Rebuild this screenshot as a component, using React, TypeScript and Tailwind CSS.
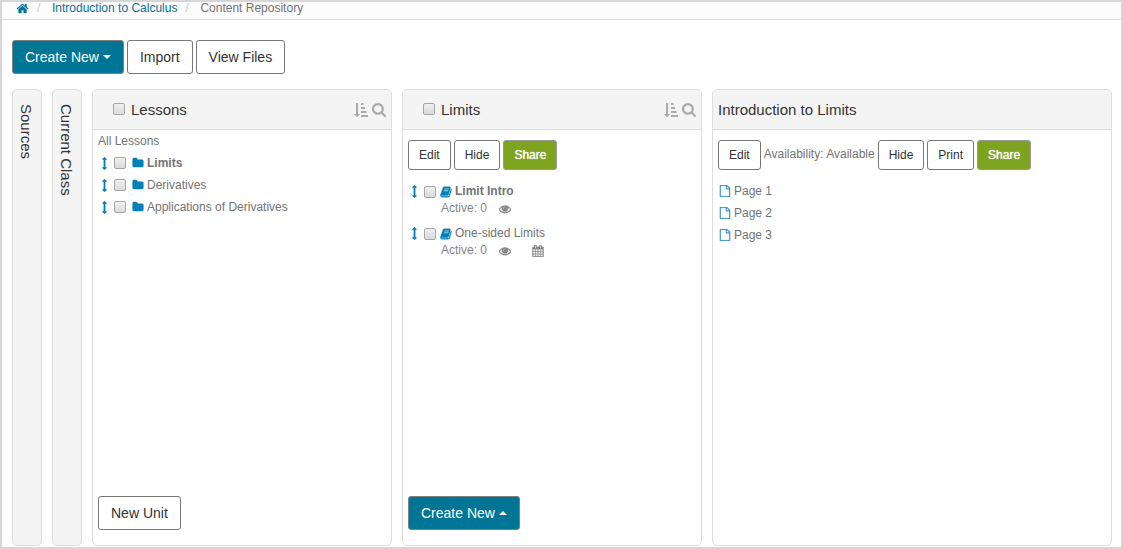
import React from 'react';
import clsx from 'clsx';

const paths = {
    home: 'M1472 992v480q0 26-19 45t-45 19h-384v-384h-256v384h-384q-26 0-45-19t-19-45v-480q0-1 .5-3t.5-3l575-474 575 474q1 2 1 6zm223-69l-62 74q-8 9-21 11h-3q-13 0-21-7l-692-577-692 577q-12 8-24 7-13-2-21-11l-62-74q-8-10-7-23.5t11-21.5l719-599q32-26 76-26t76 26l244 204v-195q0-14 9-23t23-9h192q14 0 23 9t9 23v408l219 182q10 8 11 21.5t-7 23.5z',
    folder: 'M1728 608v704q0 92-66 158t-158 66h-1216q-92 0-158-66t-66-158v-960q0-92 66-158t158-66h320q92 0 158 66t66 158v32h672q92 0 158 66t66 158z',
    search: 'M1216 832q0-185-131.5-316.5t-316.5-131.5-316.5 131.5-131.5 316.5 131.5 316.5 316.5 131.5 316.5-131.5 131.5-316.5zm512 832q0 52-38 90t-90 38q-54 0-90-38l-343-342q-179 124-399 124-143 0-273.5-55.5t-225-150-150-225-55.5-273.5 55.5-273.5 150-225 225-150 273.5-55.5 273.5 55.5 225 150 150 225 55.5 273.5q0 220-124 399l343 343q37 37 37 90z',
    sort: 'M736 1440q0 12-10 24l-319 319q-10 9-23 9-12 0-23-9l-320-320q-15-16-7-35 8-20 30-20h192v-1376q0-14 9-23t23-9h192q14 0 23 9t9 23v1376h192q14 0 23 9t9 23zM928 1536h832q32 0 32 32v192q0 32-32 32h-832q-32 0-32-32v-192q0-32 32-32zM928 1024h640q32 0 32 32v192q0 32-32 32h-640q-32 0-32-32v-192q0-32 32-32zM928 512h448q32 0 32 32v192q0 32-32 32h-448q-32 0-32-32v-192q0-32 32-32zM928 0h256q32 0 32 32v192q0 32-32 32h-256q-32 0-32-32v-192q0-32 32-32z',
    eye: 'M1664 960q-152-236-381-353 61 104 61 225 0 185-131.5 316.5t-316.5 131.5-316.5-131.5-131.5-316.5q0-121 61-225-229 117-381 353 133 205 333.5 326.5t434.5 121.5 434.5-121.5 333.5-326.5zm-720-384q0-20-14-34t-34-14q-125 0-214.5 89.5t-89.5 214.5q0 20 14 34t34 14 34-14 14-34q0-86 61-147t147-61q20 0 34-14t14-34zm848 384q0 34-20 69-140 230-376.5 368.5t-499.5 138.5-499.5-139-376.5-368q-20-35-20-69t20-69q140-229 376.5-368t499.5-139 499.5 139 376.5 368q20 35 20 69z',
    move: 'M1216 320q0 26-19 45t-45 19h-128v1024h128q26 0 45 19t19 45-19 45l-256 256q-19 19-45 19t-45-19l-256-256q-19-19-19-45t19-45 45-19h128v-1024h-128q-26 0-45-19t-19-45 19-45l256-256q19-19 45-19t45 19l256 256q19 19 19 45z',
    calendar: 'M192 1664h288v-288h-288v288zm352 0h320v-288h-320v288zm-352-352h288v-320h-288v320zm352 0h320v-320h-320v320zm-352-384h288v-288h-288v288zm736 736h320v-288h-320v288zm-384-736h320v-288h-320v288zm768 736h288v-288h-288v288zm-384-352h320v-320h-320v320zm-352-864v-288q0-13-9.5-22.5t-22.5-9.5h-64q-13 0-22.5 9.5t-9.5 22.5v288q0 13 9.5 22.5t22.5 9.5h64q13 0 22.5-9.5t9.5-22.5zm736 864h288v-320h-288v320zm-384-384h320v-288h-320v288zm384 0h288v-288h-288v288zm32-480v-288q0-13-9.5-22.5t-22.5-9.5h-64q-13 0-22.5 9.5t-9.5 22.5v288q0 13 9.5 22.5t22.5 9.5h64q13 0 22.5-9.5t9.5-22.5zm384-64v1280q0 52-38 90t-90 38h-1408q-52 0-90-38t-38-90v-1280q0-52 38-90t90-38h128v-96q0-66 47-113t113-47h64q66 0 113 47t47 113v96h384v-96q0-66 47-113t113-47h64q66 0 113 47t47 113v96h128q52 0 90 38t38 90z',
    file: 'M1596 380q28 28 48 76t20 88v1152q0 40-28 68t-68 28h-1344q-40 0-68-28t-28-68v-1600q0-40 28-68t68-28h896q40 0 88 20t76 48zm-444-244v376h376q-10-29-22-41l-313-313q-12-12-41-22zm384 1528v-1024h-416q-40 0-68-28t-28-68v-416h-768v1536h1280z',
    book: 'M1703 478q40 57 18 129l-275 906q-19 64-76.5 107.5t-122.5 43.5h-923q-77 0-148.5-53.5t-99.5-131.5q-24-67-2-127 0-4 3-27t4-37q1-8-3-21.5t-3-19.5q2-11 8-21t16.5-23.5 16.5-23.5q23-38 45-91.5t30-91.5q3-10 .5-30t-.5-28q3-11 17-28t17-23q21-36 42-92t25-90q1-9-2.5-32t.5-28q4-13 22-30.5t22-22.5q19-26 42.5-84.5t27.5-96.5q1-8-3-25.5t-2-26.5q2-8 9-18t18-23 17-21q8-12 16.5-30.5t15-35 16-36 19.5-32 26.5-23.5 36-11.5 47.5 5.5l-1 3q38-9 51-9h761q74 0 114 56t18 130l-274 906q-36 119-71.5 153.5t-128.5 34.5h-869q-27 0-38 15-11 16-1 43 24 70 144 70h923q29 0 56-15.5t35-41.5l300-987q7-22 5-57 38 15 59 43zm-1064 2q-4 13 2 22.5t20 9.5h608q13 0 25.5-9.5t16.5-22.5l21-64q4-13-2-22.5t-20-9.5h-608q-13 0-25.5 9.5t-16.5 22.5zm-83 256q-4 13 2 22.5t20 9.5h608q13 0 25.5-9.5t16.5-22.5l21-64q4-13-2-22.5t-20-9.5h-608q-13 0-25.5 9.5t-16.5 22.5z',
};

const Icon: React.FC<{ name: keyof typeof paths; className?: string; viewBox?: string }> = ({
    name,
    className = 'size-3',
    viewBox = '0 0 1792 1792',
}) => (
    <svg viewBox={viewBox} fill="currentColor" aria-hidden="true" className={clsx('shrink-0', className)}>
        <path d={paths[name]} />
    </svg>
);

const variants = {
    default: 'bg-white border-[#777] text-[#333]',
    primary: 'bg-[#007596] border-[#808080] text-white',
    share: 'bg-[#7ea31f] border-[#999] text-white [text-shadow:0_0_1px_#fff]',
};

const Button: React.FC<{
    variant?: keyof typeof variants;
    small?: boolean;
    children: React.ReactNode;
}> = ({ variant = 'default', small, children }) => (
    <button
        type="button"
        className={clsx(
            'flex shrink-0 items-center rounded-[3px] border whitespace-nowrap',
            small ? 'h-[30px] px-[10px] text-xs' : 'h-[34px] px-3 text-sm',
            variants[variant],
        )}
    >
        {children}
    </button>
);

const Caret: React.FC<{ up?: boolean }> = ({ up }) => (
    <svg viewBox="0 0 8 4" fill="currentColor" aria-hidden="true" className="ml-1 h-1 w-2">
        <path d={up ? 'M0 4h8L4 0z' : 'M0 0h8L4 4z'} />
    </svg>
);

const Checkbox: React.FC<{ label?: string }> = ({ label }) => (
    <input
        type="checkbox"
        aria-label={label}
        className="size-3 shrink-0 appearance-none rounded-[2px] border border-[#a6a6a6] bg-linear-to-b from-[#efefef] to-[#dadada]"
    />
);

const CollapsedPanel: React.FC<{ title: string }> = ({ title }) => (
    <button
        type="button"
        className="flex w-[30px] shrink-0 items-start rounded-[5px] border border-[#ddd] bg-[#f4f4f4] py-[14px] pl-1 text-[15px] leading-[18px] text-[#333]"
    >
        <span className="[writing-mode:vertical-rl]">{title}</span>
    </button>
);

const Panel: React.FC<{
    title: string;
    selectable?: boolean;
    className: string;
    children: React.ReactNode;
}> = ({ title, selectable, className, children }) => (
    <section className={clsx('flex flex-col overflow-hidden rounded-[5px] border border-[#ddd] bg-white', className)}>
        <header className="flex h-10 shrink-0 items-center border-b border-[#ddd] bg-[#f4f4f4] px-[5px] text-[15px] text-[#333]">
            {selectable ? (
                <>
                    <label className="flex flex-1 items-center gap-[6px] pl-[15px]">
                        <Checkbox />
                        {title}
                    </label>
                    <div className="flex items-center gap-1 text-[#aaa]">
                        <button type="button" aria-label={`Sort ${title}`}>
                            <Icon name="sort" className="size-[14px]" />
                        </button>
                        <button type="button" aria-label={`Search ${title}`}>
                            <Icon name="search" className="size-[14px]" viewBox="64 128 1664 1664" />
                        </button>
                    </div>
                </>
            ) : (
                <h2>{title}</h2>
            )}
        </header>
        {children}
    </section>
);

const lessons = [
    { name: 'Limits', active: true },
    { name: 'Derivatives' },
    { name: 'Applications of Derivatives' },
];

const contents = [
    { name: 'Limit Intro', active: true },
    { name: 'One-sided Limits', scheduled: true },
];

const pages = ['Page 1', 'Page 2', 'Page 3'];

export default function App() {
    return (
        <div className="flex min-h-screen flex-col border-2 border-[#d6d6d6] bg-white font-['Liberation_Sans',Arial,sans-serif] text-xs text-[#737373]">
            <nav aria-label="Breadcrumb" className="border-b border-[#ddd] bg-[#fcfcfc] px-[14px] pb-1">
                <ol className="flex items-center leading-[13px]">
                    <li>
                        <a href="#" aria-label="Home" className="text-[#007596]">
                            <Icon name="home" className="size-[13px]" />
                        </a>
                    </li>
                    <li className="flex">
                        <span className="w-[23px] pl-2 text-[#ccc]">/</span>
                        <a href="#" className="text-[#007596]">Introduction to Calculus</a>
                    </li>
                    <li className="flex">
                        <span className="w-[23px] pl-2 text-[#ccc]">/</span>
                        Content Repository
                    </li>
                </ol>
            </nav>

            <div className="flex gap-[3px] px-[10px] pt-5">
                <Button variant="primary">
                    Create New
                    <Caret />
                </Button>
                <Button>Import</Button>
                <Button>View Files</Button>
            </div>

            <main className="flex flex-1 gap-[10px] pt-[15px] pr-[9px] pb-px pl-[10px]">
                <CollapsedPanel title="Sources" />
                <CollapsedPanel title="Current Class" />

                <Panel title="Lessons" selectable className="w-[300px] shrink-0">
                    <div className="flex flex-1 flex-col items-start px-[5px] pb-[15px] leading-[22px]">
                        <a href="#">All Lessons</a>
                        <ul>
                            {lessons.map((lesson) => (
                                <li key={lesson.name} className="flex items-center">
                                    <Icon name="move" className="mr-[3px] size-[13px] text-[#0080b7]" />
                                    <Checkbox label={lesson.name} />
                                    <Icon name="folder" className="mr-[3px] ml-[6px] size-3 text-[#0080b7]" />
                                    <a href="#" className={clsx(lesson.active && 'font-bold')}>{lesson.name}</a>
                                </li>
                            ))}
                        </ul>
                        <div className="mt-auto">
                            <Button>New Unit</Button>
                        </div>
                    </div>
                </Panel>

                <Panel title="Limits" selectable className="w-[300px] shrink-0">
                    <div className="flex flex-1 flex-col items-start px-[5px] pt-[10px] pb-[15px]">
                        <div className="flex gap-[3px]">
                            <Button small>Edit</Button>
                            <Button small>Hide</Button>
                            <Button small variant="share">Share</Button>
                        </div>
                        <ul className="flex flex-col gap-2 pt-[13px] leading-[17px]">
                            {contents.map((item) => (
                                <li key={item.name}>
                                    <div className="flex items-center">
                                        <Icon name="move" className="mr-[3px] size-[13px] text-[#0080b7]" />
                                        <Checkbox label={item.name} />
                                        <Icon name="book" className="mr-[3px] ml-1 size-3 stroke-current stroke-[60px] text-[#0080b7]" />
                                        <a href="#" className={clsx(item.active && 'font-bold')}>{item.name}</a>
                                    </div>
                                    <div className="flex items-center pl-[33px] text-[#868686]">
                                        Active: 0
                                        <Icon name="eye" className="ml-3 size-3 stroke-current stroke-[60px]" />
                                        {item.scheduled && <Icon name="calendar" className="ml-[21px] size-3 stroke-current stroke-[40px]" />}
                                    </div>
                                </li>
                            ))}
                        </ul>
                        <div className="mt-auto">
                            <Button variant="primary">
                                Create New
                                <Caret up />
                            </Button>
                        </div>
                    </div>
                </Panel>

                <Panel title="Introduction to Limits" className="min-w-0 flex-1">
                    <div className="px-[5px] pt-[10px]">
                        <div className="flex items-center gap-[3px]">
                            <Button small>Edit</Button>
                            <span className="pb-[3px]">Availability: Available</span>
                            <Button small>Hide</Button>
                            <Button small>Print</Button>
                            <Button small variant="share">Share</Button>
                        </div>
                        <ul className="pt-[10px] pl-px leading-[22px]">
                            {pages.map((page) => (
                                <li key={page} className="flex items-center gap-[3px]">
                                    <Icon name="file" className="size-3 stroke-current stroke-[40px] text-[#2f89c5]" />
                                    <a href="#">{page}</a>
                                </li>
                            ))}
                        </ul>
                    </div>
                </Panel>
            </main>
        </div>
    );
}
